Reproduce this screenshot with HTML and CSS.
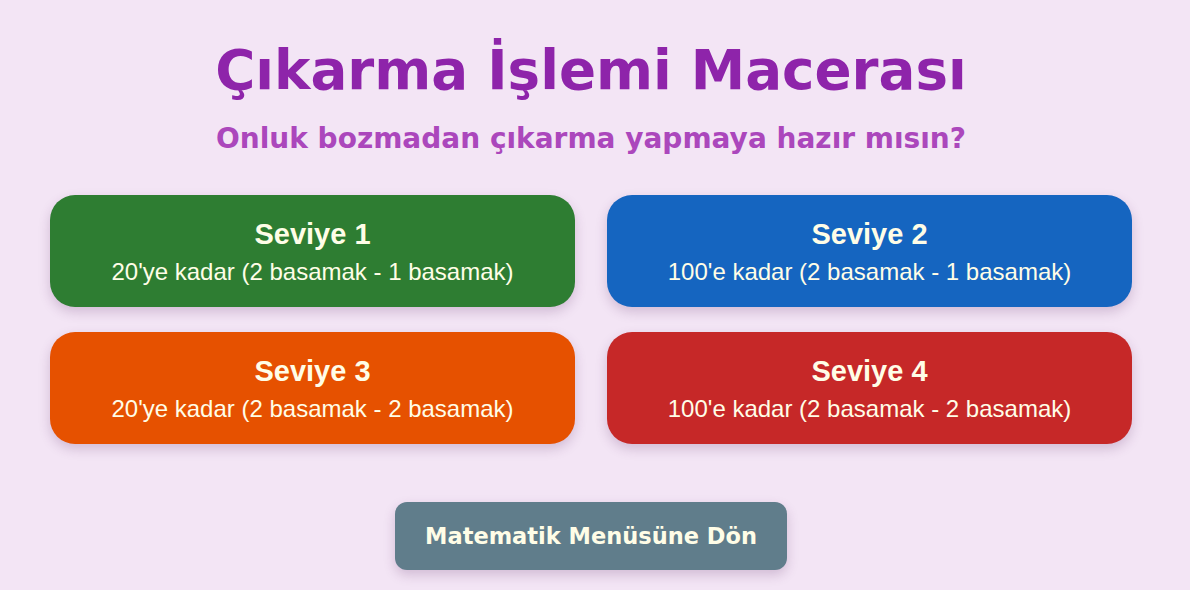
FILE: index.html
```html
<!DOCTYPE html>
<html lang="tr">
<head>
<meta charset="utf-8">
<title>Çıkarma İşlemi Macerası</title>
<link rel="stylesheet" href="styles.css">
</head>
<body>
<main class="page">
  <header class="head">
    <h1 class="title">Çıkarma İşlemi Macerası</h1>
    <p class="subtitle">Onluk bozmadan çıkarma yapmaya hazır mısın?</p>
  </header>
  <section class="levels">
    <button class="level green"><span class="lv-name">Seviye 1</span><span class="lv-desc">20'ye kadar (2 basamak - 1 basamak)</span></button>
    <button class="level blue"><span class="lv-name">Seviye 2</span><span class="lv-desc">100'e kadar (2 basamak - 1 basamak)</span></button>
    <button class="level orange"><span class="lv-name">Seviye 3</span><span class="lv-desc">20'ye kadar (2 basamak - 2 basamak)</span></button>
    <button class="level red"><span class="lv-name">Seviye 4</span><span class="lv-desc">100'e kadar (2 basamak - 2 basamak)</span></button>
  </section>
  <div class="back-wrap">
    <button class="back">Matematik Menüsüne Dön</button>
  </div>
</main>
</body>
</html>
```
FILE: styles.css
```css
* { box-sizing: border-box; }
html, body { margin: 0; padding: 0; }
body {
  background: #f3e5f5;
  width: 1190px;
  height: 590px;
  overflow: hidden;
}
.page {
  width: 1082px;
  margin-left: 50px;
  display: flex;
  flex-direction: column;
  align-items: center;
}
.head {
  text-align: center;
  padding-top: 30px;
  height: 195px;
}
.title {
  margin: 0;
  font-family: "Comic Sans MS", "DejaVu Sans", sans-serif;
  font-weight: 700;
  font-size: 54.7px;
  line-height: 80px;
  color: #8e24aa;
}
.subtitle {
  margin: 6px 0 0;
  font-family: "Comic Sans MS", "DejaVu Sans", sans-serif;
  font-weight: 700;
  font-size: 28px;
  line-height: 46px;
  color: #ab47bc;
}
.levels {
  width: 100%;
  display: grid;
  grid-template-columns: 1fr 1fr;
  column-gap: 32px;
  row-gap: 25px;
}
.level {
  height: 112px;
  border: none;
  border-radius: 25px;
  color: #fffde7;
  display: flex;
  flex-direction: column;
  align-items: center;
  justify-content: center;
  font-family: "Liberation Sans", Arial, sans-serif;
  box-shadow: 0 5px 12px rgba(90, 40, 100, 0.22);
  padding: 0;
}
.lv-name {
  font-size: 29px;
  font-weight: 700;
  line-height: 36px;
  margin-bottom: 5px;
}
.lv-desc {
  font-size: 24px;
  line-height: 30px;
}
.green { background: #2e7d32; }
.blue { background: #1565c0; }
.orange { background: #e65100; }
.red { background: #c62828; }
.back-wrap {
  padding-top: 58px;
}
.back {
  width: 392px;
  height: 68px;
  border: none;
  border-radius: 12px;
  background: #607d8b;
  color: #fffde7;
  font-family: "Comic Sans MS", "DejaVu Sans", sans-serif;
  font-weight: 700;
  font-size: 22.5px;
  box-shadow: 0 5px 12px rgba(90, 40, 100, 0.22);
}
```
